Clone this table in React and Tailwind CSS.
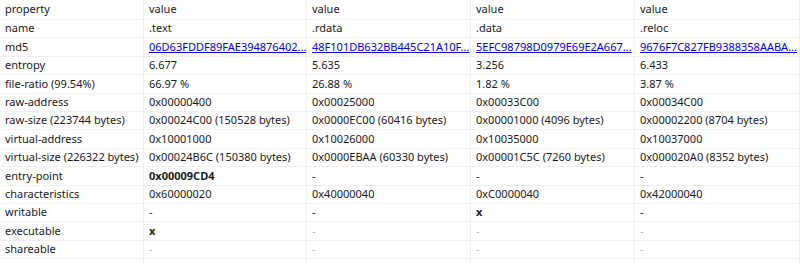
import React from 'react';

const cols = ['w-[144px]', 'w-[163px]', 'w-[164px]', 'w-[164px]', 'w-[165px]'];

// v: plain value, { link }, { bold }, { dim }
const rows = [
  ['name', '.text', '.rdata', '.data', '.reloc'],
  ['md5', { link: '06D63FDDF89FAE394876402...' }, { link: '48F101DB632BB445C21A10F...' }, { link: '5EFC98798D0979E69E2A667...' }, { link: '9676F7C827FB9388358AABA...' }],
  ['entropy', '6.677', '5.635', '3.256', '6.433'],
  ['file-ratio (99.54%)', '66.97 %', '26.88 %', '1.82 %', '3.87 %'],
  ['raw-address', '0x00000400', '0x00025000', '0x00033C00', '0x00034C00'],
  ['raw-size (223744 bytes)', '0x00024C00 (150528 bytes)', '0x0000EC00 (60416 bytes)', '0x00001000 (4096 bytes)', '0x00002200 (8704 bytes)'],
  ['virtual-address', '0x10001000', '0x10026000', '0x10035000', '0x10037000'],
  ['virtual-size (226322 bytes)', '0x00024B6C (150380 bytes)', '0x0000EBAA (60330 bytes)', '0x00001C5C (7260 bytes)', '0x000020A0 (8352 bytes)'],
  ['entry-point', { bold: '0x00009CD4' }, '-', '-', '-'],
  ['characteristics', '0x60000020', '0x40000040', '0xC0000040', '0x42000040'],
  ['writable', '-', '-', { bold: 'x' }, '-'],
  ['executable', { bold: 'x' }, { dim: '-' }, { dim: '-' }, { dim: '-' }],
  ['shareable', { dim: '-' }, { dim: '-' }, { dim: '-' }, { dim: '-' }],
  ['', '', '', '', ''],
];

const Cell = ({ v, i }) => {
  let content = v;
  if (v && typeof v === 'object') {
    if (v.link) content = <span className="text-[#0000ee] underline">{v.link}</span>;
    else if (v.bold) content = <span className="font-bold">{v.bold}</span>;
    else if (v.dim) content = <span className="text-[#b8b8b8]">{v.dim}</span>;
  }
  return (
    <div className={`${cols[i]} shrink-0 pl-[5px] border-r border-[#f0f0f0] whitespace-nowrap overflow-hidden flex items-center`}>
      {content}
    </div>
  );
};

export default function App() {
  return (
    <div className="w-[800px] h-[264px] overflow-hidden bg-white text-[11px] text-[#1a1a1a]" style={{ fontFamily: '"Noto Sans", "Segoe UI", sans-serif' }}>
      <div className="flex h-[20px] border-b border-[#f0f0f0]">
        {['property', 'value', 'value', 'value', 'value'].map((h, i) => (
          <Cell key={i} v={h} i={i} />
        ))}
      </div>
      {rows.map((r, ri) => (
        <div key={ri} className="flex h-[18.4px] border-b border-[#f0f0f0]">
          {r.map((v, i) => (
            <Cell key={i} v={v} i={i} />
          ))}
        </div>
      ))}
    </div>
  );
}
